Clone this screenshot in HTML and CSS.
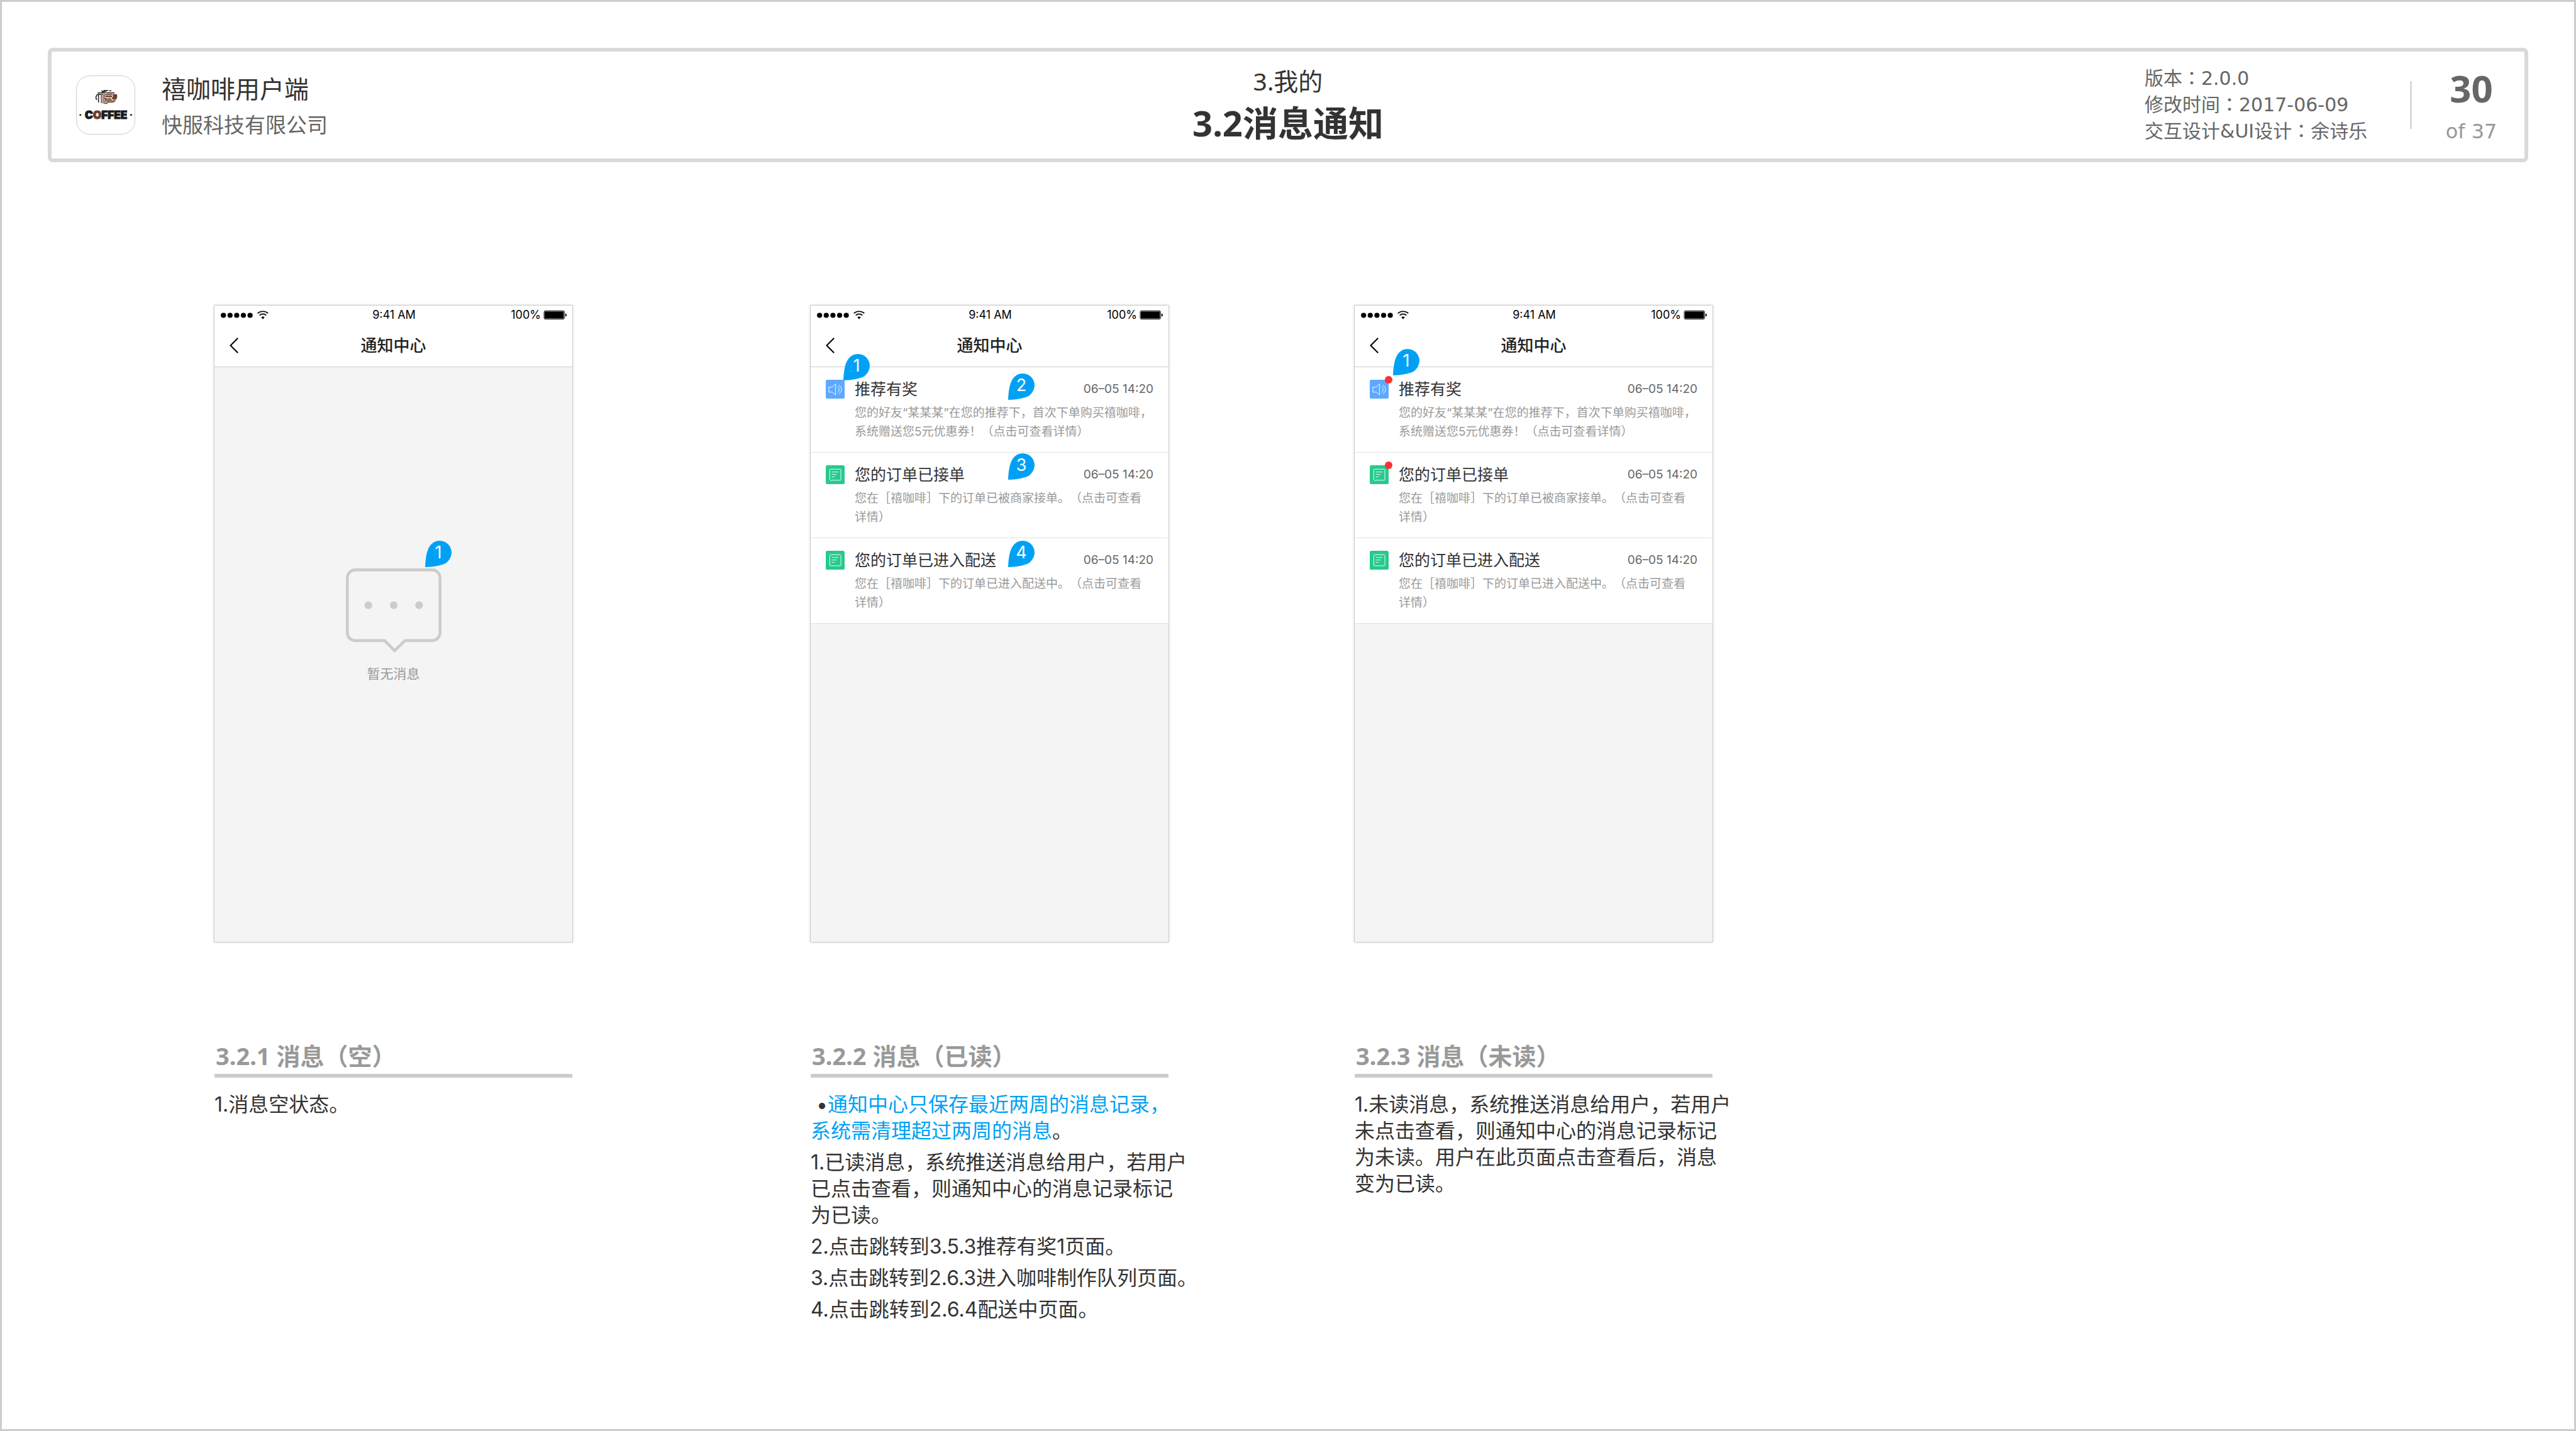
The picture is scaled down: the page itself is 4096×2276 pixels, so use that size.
FILE: index.html
```html
<!DOCTYPE html>
<html lang="zh-CN">
<head>
<meta charset="utf-8">
<title>3.2消息通知</title>
<link rel="stylesheet" href="styles.css">
</head>
<body>
<svg class="defs" aria-hidden="true">
  <symbol id="pin" viewBox="0 0 165 165"><path fill="#00a1f5" d="M0 165C2 110 10 60 28 35C42 13 66 0 92 0C132 0 165 33 165 73C165 98 152 122 132 138C105 154 55 163 0 165Z"/></symbol>
  <symbol id="signal" viewBox="0 0 51 9"><g fill="#000"><circle cx="4.2" cy="4.5" r="4.1"/><circle cx="14.8" cy="4.5" r="4.1"/><circle cx="25.4" cy="4.5" r="4.1"/><circle cx="36" cy="4.5" r="4.1"/><circle cx="46.6" cy="4.5" r="4.1"/></g></symbol>
  <symbol id="wifi" viewBox="0 0 24 18"><g fill="none" stroke="#000" stroke-width="2.3"><path d="M.9 5.6C7-.1 17-.1 23.1 5.6"/><path d="M4.9 9.8C9 6 15 6 19.1 9.8"/></g><path d="M12 18L8.3 13.6C10.4 11.8 13.6 11.8 15.7 13.6Z"/></symbol>
  <symbol id="battery" viewBox="0 0 50 19"><rect x=".7" y=".7" width="43.6" height="17.6" rx="3" fill="none" stroke="#000" stroke-width="1.4"/><rect x="2" y="2" width="41" height="15" rx="1.6"/><path d="M46.5 6C50.500 7.500 50.500 11.500 46.500 13Z"/></symbol>
  <symbol id="back" viewBox="0 0 18 32"><path d="M17 1L2 16L17 31" fill="none" stroke="#000" stroke-width="2.6"/></symbol>
  <symbol id="speaker" viewBox="0 0 40 40"><rect width="40" height="40" rx="3.500" fill="#5ea9ff"/><g fill="none" stroke="#fff" stroke-width="1.200"><path d="M6.500 15.500H14L20.800 8.500V32.300L14 26.200H6.500Z"/><path d="M25 14.200C29.500 17.500 29.500 23.500 25 27"/><path d="M27.600 11C35.500 16 35.500 25 27.600 30"/></g></symbol>
  <symbol id="order" viewBox="0 0 40 40"><rect width="40" height="40" rx="3.500" fill="#28c98d"/><g fill="none" stroke="#fff" stroke-width="1.200"><rect x="8.500" y="8.300" width="23.500" height="23.500" rx="1.500"/><path d="M12.700 14.300H27M12.700 19.600H23M12.700 24.800H19"/></g></symbol>
</svg>

<div class="page">
  <header class="header">
    <div class="brand">
      <svg class="logo" viewBox="12 14 372 372" role="img" aria-label="禧咖啡 COFFEE">
        <rect x="14" y="16" width="368" height="368" rx="86" fill="#fff" stroke="#bdbdbd" stroke-width="3"/>
        <g fill="none" stroke-width="6" stroke-linecap="round">
          <g stroke="#1a1a1a">
            <path d="M172 113H192M188 109H212M222 111H232M150 124H194M204 124H252M176 122C180 116 190 113 200 118"/>
            <path d="M144 136C136 146 136 158 141 166M153 134V182M146 134H166"/>
          </g>
          <g stroke="#6b3f2a">
            <path d="M171 134V186M182 134V188M171 134H182M192 134V164M192 134H238M200 143H236M200 148H236M192 158H208M216 158H228M192 166H236M192 174V190H208M192 174H252M204 182H244"/>
          </g>
        </g>
        <path d="M242 132H268C273 144 271 156 264 166H242V160H236V152H244Z" fill="#6b3f2a"/>
        <path d="M248 170H262L252 182H246Z" fill="#6b3f2a"/>
        <circle cx="39" cy="262" r="6" fill="#1a1a1a"/><circle cx="358" cy="262" r="6" fill="#1a1a1a"/>
        <text class="logo-text" x="201" y="287" text-anchor="middle">C<tspan class="logo-o">O</tspan>FFEE</text>
      </svg>
      <div class="brand-text">
        <p class="product">禧咖啡用户端</p>
        <p class="company">快服科技有限公司</p>
      </div>
    </div>
    <div class="heading">
      <p class="chapter">3.我的</p>
      <h1 class="title">3.2消息通知</h1>
    </div>
    <div class="info">
      <div class="meta">
        <p>版本<span class="mid" lang="ja">：</span>2.0.0</p>
        <p>修改时间<span class="mid" lang="ja">：</span>2017-06-09</p>
        <p>交互设计&amp;UI设计<span class="mid" lang="ja">：</span>余诗乐</p>
      </div>
      <div class="pager">
        <p class="current">30</p>
        <p class="total">of 37</p>
      </div>
    </div>
  </header>

  <main class="board">
    <section class="screen screen-1">
      <div class="phone">
        <div class="status">
          <span class="carrier"><svg class="i-signal"><use href="#signal"/></svg><svg class="i-wifi"><use href="#wifi"/></svg></span>
          <span>9:41 AM</span>
          <span class="power">100%<svg class="i-battery"><use href="#battery"/></svg></span>
        </div>
        <div class="nav">
          <button class="back" type="button" aria-label="返回"><svg><use href="#back"/></svg></button>
          <h2 class="nav-title">通知中心</h2>
        </div>
        <div class="empty">
          <svg class="bubble" viewBox="0 0 600 528" aria-hidden="true"><path d="M59 9H541A50 50 0 0 1 591 59V403A50 50 0 0 1 541 453H371L306 516L243 453H59A50 50 0 0 1 9 403V59A50 50 0 0 1 59 9Z" fill="none" stroke="#ccc" stroke-width="18"/><g fill="#ccc"><circle cx="141" cy="231" r="24"/><circle cx="300" cy="231" r="24"/><circle cx="459" cy="231" r="24"/></g></svg>
          <p class="empty-text">暂无消息</p>
        </div>
        <span class="pin pin-a"><svg><use href="#pin"/></svg><b>1</b></span>
      </div>
      <h3 class="caption">3.2.1 消息（空）</h3>
      <div class="desc">
        <p>1.消息空状态。</p>
      </div>
    </section>

    <section class="screen screen-2">
      <div class="phone">
        <div class="status">
          <span class="carrier"><svg class="i-signal"><use href="#signal"/></svg><svg class="i-wifi"><use href="#wifi"/></svg></span>
          <span>9:41 AM</span>
          <span class="power">100%<svg class="i-battery"><use href="#battery"/></svg></span>
        </div>
        <div class="nav">
          <button class="back" type="button" aria-label="返回"><svg><use href="#back"/></svg></button>
          <h2 class="nav-title">通知中心</h2>
        </div>
        <ul class="list">
          <li class="item">
            <span class="thumb"><svg><use href="#speaker"/></svg></span>
            <h4 class="item-title">推荐有奖</h4><time class="item-time">06–05 14:20</time>
            <p class="item-text">您的好友“某某某”在您的推荐下，首次下单购买禧咖啡，<br>系统赠送您5元优惠券！（点击可查看详情）</p>
          </li>
          <li class="item">
            <span class="thumb"><svg><use href="#order"/></svg></span>
            <h4 class="item-title">您的订单已接单</h4><time class="item-time">06–05 14:20</time>
            <p class="item-text">您在［禧咖啡］下的订单已被商家接单。（点击可查看<br>详情）</p>
          </li>
          <li class="item">
            <span class="thumb"><svg><use href="#order"/></svg></span>
            <h4 class="item-title">您的订单已进入配送</h4><time class="item-time">06–05 14:20</time>
            <p class="item-text">您在［禧咖啡］下的订单已进入配送中。（点击可查看<br>详情）</p>
          </li>
        </ul>
        <span class="pin pin-b"><svg><use href="#pin"/></svg><b>1</b></span>
        <span class="pin pin-c"><svg><use href="#pin"/></svg><b>2</b></span>
        <span class="pin pin-d"><svg><use href="#pin"/></svg><b>3</b></span>
        <span class="pin pin-e"><svg><use href="#pin"/></svg><b>4</b></span>
      </div>
      <h3 class="caption">3.2.2 消息（已读）</h3>
      <div class="desc">
        <p>&nbsp;•<em class="note">通知中心只保存最近两周的消息记录，<br>系统需清理超过两周的消息</em>。</p>
        <p>1.已读消息，系统推送消息给用户，若用户<br>已点击查看，则通知中心的消息记录标记<br>为已读。</p>
        <p>2.点击跳转到3.5.3推荐有奖1页面。</p>
        <p>3.点击跳转到2.6.3进入咖啡制作队列页面。</p>
        <p>4.点击跳转到2.6.4配送中页面。</p>
      </div>
    </section>

    <section class="screen screen-3">
      <div class="phone">
        <div class="status">
          <span class="carrier"><svg class="i-signal"><use href="#signal"/></svg><svg class="i-wifi"><use href="#wifi"/></svg></span>
          <span>9:41 AM</span>
          <span class="power">100%<svg class="i-battery"><use href="#battery"/></svg></span>
        </div>
        <div class="nav">
          <button class="back" type="button" aria-label="返回"><svg><use href="#back"/></svg></button>
          <h2 class="nav-title">通知中心</h2>
        </div>
        <ul class="list">
          <li class="item">
            <span class="thumb unread"><svg><use href="#speaker"/></svg></span>
            <h4 class="item-title">推荐有奖</h4><time class="item-time">06–05 14:20</time>
            <p class="item-text">您的好友“某某某”在您的推荐下，首次下单购买禧咖啡，<br>系统赠送您5元优惠券！（点击可查看详情）</p>
          </li>
          <li class="item">
            <span class="thumb unread"><svg><use href="#order"/></svg></span>
            <h4 class="item-title">您的订单已接单</h4><time class="item-time">06–05 14:20</time>
            <p class="item-text">您在［禧咖啡］下的订单已被商家接单。（点击可查看<br>详情）</p>
          </li>
          <li class="item">
            <span class="thumb"><svg><use href="#order"/></svg></span>
            <h4 class="item-title">您的订单已进入配送</h4><time class="item-time">06–05 14:20</time>
            <p class="item-text">您在［禧咖啡］下的订单已进入配送中。（点击可查看<br>详情）</p>
          </li>
        </ul>
        <span class="pin pin-f"><svg><use href="#pin"/></svg><b>1</b></span>
      </div>
      <h3 class="caption">3.2.3 消息（未读）</h3>
      <div class="desc">
        <p>1.未读消息，系统推送消息给用户，若用户<br>未点击查看，则通知中心的消息记录标记<br>为未读。用户在此页面点击查看后，消息<br>变为已读。</p>
      </div>
    </section>
  </main>
</div>
</body>
</html>
```

FILE: styles.css
```css
* { box-sizing: border-box; margin: 0; padding: 0; }

body {
  background: #fff;
  color: #333;
  font-family: Inter, "Noto Sans CJK SC", sans-serif;
  text-spacing-trim: space-all;
}

.defs { display: none; }
svg { display: block; }

.page {
  min-height: 100vh;
  border: 3px solid #ccc;
  padding: 73px 73px 0;
}

/* Header */
.header {
  display: grid;
  grid-template-columns: 1fr auto 1fr;
  align-items: center;
  height: 182px;
  padding: 0 39px;
  border: 6px solid #d9d9d9;
  border-radius: 8px;
  font-family: "Noto Sans", "Noto Sans CJK SC", sans-serif;
}
.brand { display: flex; align-items: center; gap: 42px; }
.logo { width: 94px; height: 94px; }
.logo-text {
  font: 900 68px Inter, sans-serif;
  fill: #1a1a1a;
  stroke: #1a1a1a;
  stroke-width: 4px;
}
.logo-o { fill: #6b3f2a; stroke: #6b3f2a; }
.brand-text { padding-top: 5px; }
.product { font-size: 39px; line-height: 58px; }
.company { font-size: 33px; line-height: 58px; color: #666; }
.heading { text-align: center; }
.chapter { font-size: 39px; line-height: 56px; }
.title { font-size: 56px; line-height: 76px; }
.info {
  display: flex;
  justify-content: flex-end;
  align-items: center;
  font-family: "DejaVu Sans", "Noto Sans CJK SC", sans-serif;
  color: #666;
}
.meta { width: 422px; font-size: 30px; line-height: 42px; }
.mid { font-family: "Noto Sans CJK JP", sans-serif; line-height: 1; }
.pager {
  position: relative;
  width: 143px;
  padding: 6px 0 0 52px;
  text-align: center;
  white-space: nowrap;
}
.pager::before {
  content: "";
  position: absolute;
  left: 0;
  top: 34px;
  width: 3px;
  height: 76px;
  background: #d9d9d9;
}
.current { font: 700 60px/78px "Noto Sans", sans-serif; }
.total { font-size: 32px; line-height: 60px; color: #999; }

/* Board of screens */
.board {
  display: grid;
  grid-template-columns: 265fr 569fr 379fr 569fr 296fr 569fr 1297fr;
  padding-top: 228px;
}
.screen { min-width: 0; }
.screen-1 { grid-column: 2; }
.screen-2 { grid-column: 4; }
.screen-3 { grid-column: 6; }

/* Phone */
.phone {
  position: relative;
  min-height: 1012px;
  background: #f4f4f4;
  outline: 1px solid #ccc;
  box-shadow: 0 0 4px rgba(0, 0, 0, .25);
}
.status {
  display: grid;
  grid-template-columns: 1fr auto 1fr;
  align-items: center;
  height: 30px;
  padding: 0 8px 0 10px;
  background: #fff;
  color: #000;
  font-size: 18px;
  line-height: 30px;
}
.carrier { display: flex; align-items: center; gap: 7px; }
.power { display: flex; align-items: center; justify-content: flex-end; gap: 4px; }
.i-signal { width: 51px; height: 9px; }
.i-wifi { width: 18px; height: 14px; }
.i-battery { width: 38px; height: 14px; }
.nav {
  display: grid;
  grid-template-columns: 1fr auto 1fr;
  align-items: center;
  height: 68px;
  padding: 0 24px;
  background: #fff;
  border-bottom: 1px solid #ccc;
}
.back { width: 14px; height: 25px; border: 0; background: none; }
.back svg { width: 14px; height: 25px; }
.nav-title { font-size: 26px; font-weight: 500; line-height: 66px; color: #222; }

/* Empty state */
.empty {
  display: flex;
  flex-direction: column;
  align-items: center;
  padding-top: 320px;
}
.bubble { width: 152px; height: 134px; }
.empty-text { margin-top: 18px; font-size: 21px; line-height: 32px; color: #999; }

/* Message list */
.list { list-style: none; background: #fff; }
.item {
  display: grid;
  grid-template-columns: 30px 1fr auto;
  column-gap: 16px;
  align-items: center;
  padding: 20px 24px 17px;
  border-bottom: 1px solid #e3e3e3;
}
.thumb { position: relative; width: 30px; height: 30px; }
.thumb svg { width: 30px; height: 30px; }
.unread::after {
  content: "";
  position: absolute;
  top: -6px;
  right: -6px;
  width: 12px;
  height: 12px;
  border-radius: 50%;
  background: #fa3232;
}
.item-title { font-size: 25px; font-weight: 400; line-height: 30px; }
.item-time { font-size: 19px; line-height: 30px; color: #666; }
.item-text {
  grid-column: 2 / 4;
  margin-top: 8px;
  font-size: 19px;
  line-height: 30px;
  color: #999;
  white-space: nowrap;
}

/* Numbered markers laid over the screens */
.pin {
  position: absolute;
  width: 42px;
  height: 42px;
  color: #fff;
  text-align: center;
}
.pin svg { position: absolute; width: 42px; height: 42px; }
.pin b { position: relative; font-size: 27px; font-weight: 400; line-height: 38px; }
.pin-a { left: 335px; top: 374px; }
.pin-b { left: 52px; top: 77px; }
.pin-c { left: 314px; top: 108px; }
.pin-d { left: 314px; top: 235px; }
.pin-e { left: 314px; top: 374px; }
.pin-f { left: 61px; top: 69px; }

/* Captions */
.caption {
  margin-top: 156px;
  padding: 0 0 4px 2px;
  border-bottom: 6px solid #ccc;
  font: 700 38px/50px "Noto Sans", "Noto Sans CJK SC", sans-serif;
  color: #999;
}
.desc {
  display: flex;
  flex-direction: column;
  gap: 8px;
  padding-top: 22px;
  font-size: 32px;
  line-height: 42px;
  white-space: nowrap;
}
.note { font-style: normal; color: #00a1f5; }
```
